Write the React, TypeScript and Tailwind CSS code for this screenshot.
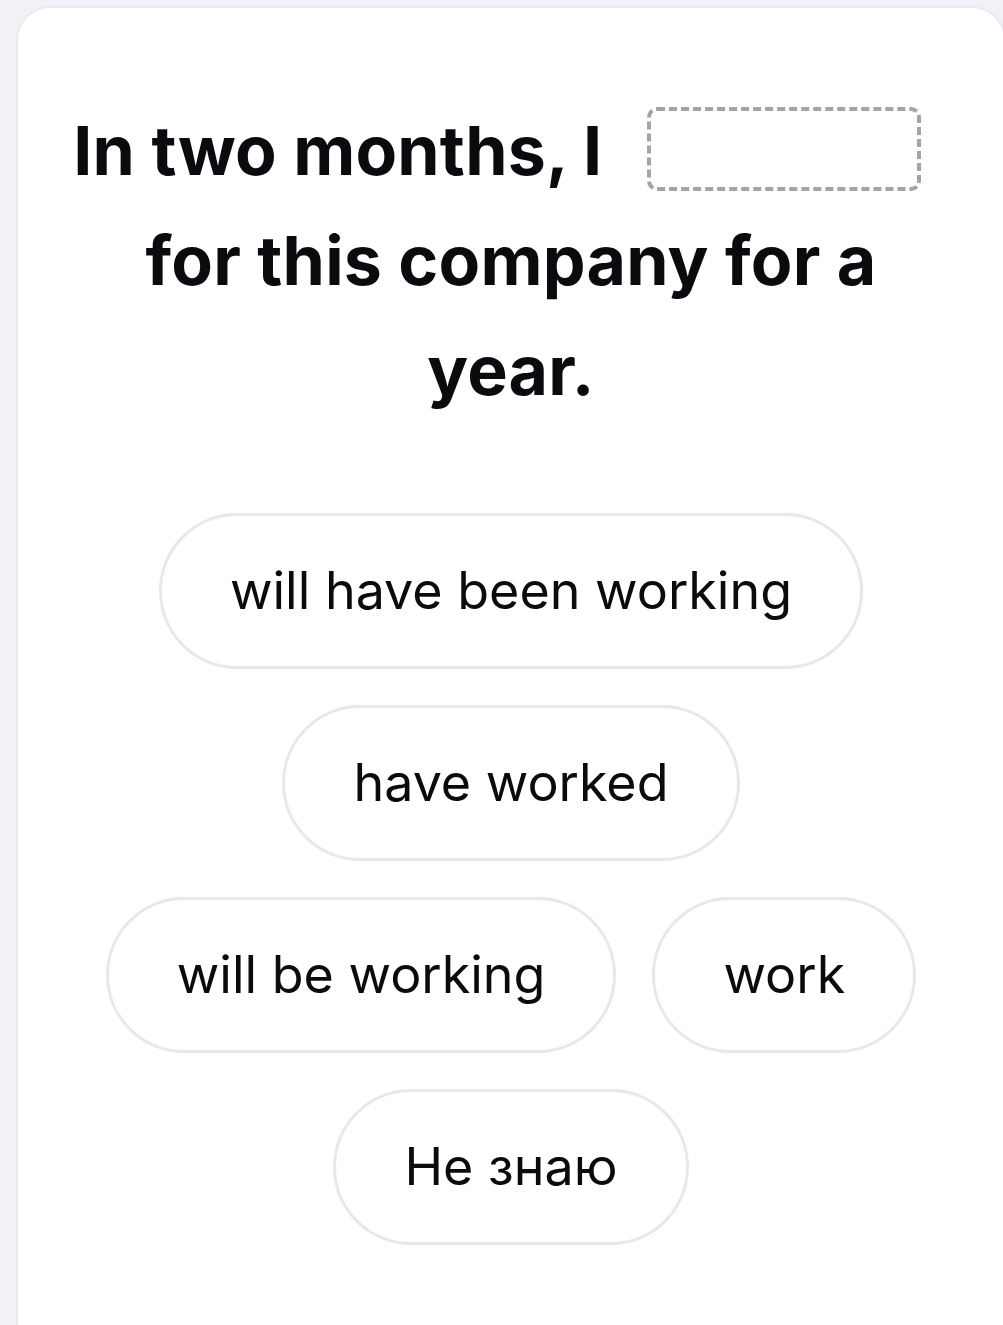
import React from 'react'

const options = ['will have been working', 'have worked', 'will be working', 'work', 'Не знаю']

export default function App() {
  return (
    <div
      className="min-h-[1325px] bg-[#f2f2f6] pt-[6px] pl-[16px]"
      style={{ fontFamily: 'Inter, "Noto Sans", sans-serif' }}
    >
      <div className="min-h-[1319px] w-[990px] rounded-tl-[34px] rounded-tr-[34px] border-2 border-b-0 border-[#e9e9ef] bg-white px-[48px] pt-[87px]">
        {/* question */}
        <h1 className="text-center text-[68px] font-bold leading-[110px] tracking-[0.2px] text-[#0b0b0f]">
          In two months, I{' '}
          <span className="mx-[28px] inline-block h-[84px] w-[274px] rounded-[10px] border-4 border-dashed border-[#a3a3ac] align-[-16px]" />{' '}
          for this company for a year.
        </h1>

        {/* answers */}
        <div className="mt-[88px] flex flex-wrap justify-center gap-[36px]">
          {options.map((o) => (
            <button
              key={o}
              className="rounded-full border-[3px] border-[#e7e7ee] bg-white px-[68px] py-[44px] text-[52px] leading-[62px] text-[#0b0b0f]"
            >
              {o}
            </button>
          ))}
        </div>
      </div>
    </div>
  )
}
